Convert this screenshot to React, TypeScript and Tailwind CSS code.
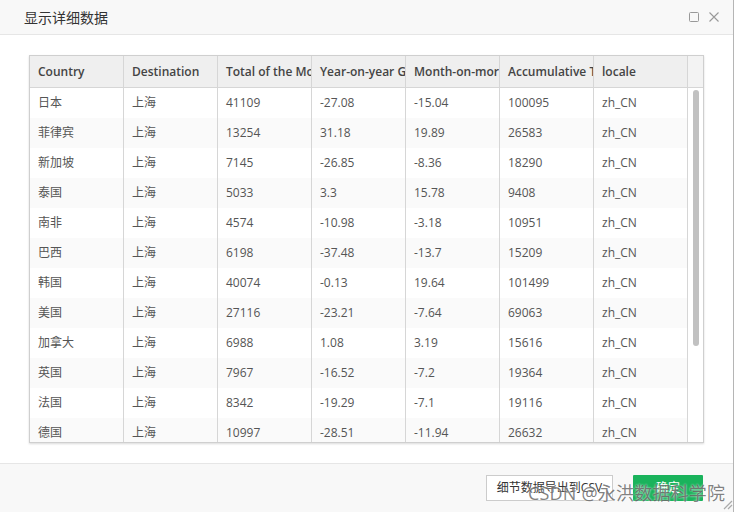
import React from 'react';

const COLS = ['Country', 'Destination', 'Total of the Mo', 'Year-on-year Gr', 'Month-on-mor', 'Accumulative T', 'locale'];

const ROWS: string[][] = [
  ['日本', '上海', '41109', '-27.08', '-15.04', '100095', 'zh_CN'],
  ['菲律宾', '上海', '13254', '31.18', '19.89', '26583', 'zh_CN'],
  ['新加坡', '上海', '7145', '-26.85', '-8.36', '18290', 'zh_CN'],
  ['泰国', '上海', '5033', '3.3', '15.78', '9408', 'zh_CN'],
  ['南非', '上海', '4574', '-10.98', '-3.18', '10951', 'zh_CN'],
  ['巴西', '上海', '6198', '-37.48', '-13.7', '15209', 'zh_CN'],
  ['韩国', '上海', '40074', '-0.13', '19.64', '101499', 'zh_CN'],
  ['美国', '上海', '27116', '-23.21', '-7.64', '69063', 'zh_CN'],
  ['加拿大', '上海', '6988', '1.08', '3.19', '15616', 'zh_CN'],
  ['英国', '上海', '7967', '-16.52', '-7.2', '19364', 'zh_CN'],
  ['法国', '上海', '8342', '-19.29', '-7.1', '19116', 'zh_CN'],
  ['德国', '上海', '10997', '-28.51', '-11.94', '26632', 'zh_CN'],
];

const font = { fontFamily: '"Open Sans", "Noto Sans CJK SC", sans-serif' };

export default function App() {
  return (
    <div className="relative w-[735px] h-[512px] overflow-hidden bg-white" style={font}>
      <div className="flex flex-col h-full w-[734px] border-r border-[#b5b5b5]">
        {/* Header */}
        <div className="h-[35px] shrink-0 flex items-center justify-between bg-[#f8f8f8] border-b border-[#e6e6e6] pl-[24px] pr-[14px]">
          <span className="text-[14px] text-[#333]">显示详细数据</span>
          <div className="flex items-center gap-[10px]">
            <svg width="10" height="10" viewBox="0 0 10 10">
              <rect x="0.5" y="0.5" width="9" height="9" rx="1" fill="none" stroke="#999" strokeWidth="1" />
            </svg>
            <svg width="10" height="10" viewBox="0 0 10 10">
              <path d="M0.5 0.5 L9.5 9.5 M9.5 0.5 L0.5 9.5" stroke="#999" strokeWidth="1.1" />
            </svg>
          </div>
        </div>

        {/* Body */}
        <div className="flex-1 pt-[20px] pl-[29px] pr-[30px]">
          <div className="relative w-[675px] h-[388px] border border-[#cfcfcf] overflow-hidden shadow-[0_1px_2px_rgba(0,0,0,0.15)]">
            <div className="flex h-[32px] bg-[#efefef] border-b border-[#d6d6d6]">
              {COLS.map((c) => (
                <div key={c} className="w-[94px] shrink-0 border-r border-[#d6d6d6] pl-[8px] pt-[1px] flex items-center text-[12px] font-semibold text-[#444] overflow-hidden whitespace-nowrap">
                  {c}
                </div>
              ))}
              <div className="flex-1 bg-[#f3f3f3]" />
            </div>
            <div className="flex">
              <div>
                {ROWS.map((r, i) => (
                  <div key={i} className={`flex h-[30px] ${i % 2 === 1 ? 'bg-[#fafafa]' : 'bg-white'}`}>
                    {r.map((v, j) => (
                      <div key={j} className="w-[94px] shrink-0 border-r border-[#d6d6d6] pl-[8px] flex items-center text-[12px] text-[#555] whitespace-nowrap">
                        {v}
                      </div>
                    ))}
                  </div>
                ))}
              </div>
              <div className="flex-1 pt-[2px] flex justify-center">
                <div className="w-[6px] h-[256px] rounded-[3px] bg-[#c1c1c1]" />
              </div>
            </div>
          </div>
        </div>

        {/* Footer */}
        <div className="h-[49px] shrink-0 bg-[#f8f8f8] border-t border-[#e6e6e6] flex items-start justify-end gap-[20px] pt-[11px] pr-[30px]">
          <button className="h-[26px] w-[127px] bg-white border border-[#cccccc] text-[12px] text-[#333]">
            细节数据导出到CSV
          </button>
          <button className="h-[26px] w-[70px] bg-[#1ab35c] text-[12px] text-white rounded-[1px]">确定</button>
        </div>
      </div>

      {/* watermark */}
      <div className="absolute left-[528px] top-[480px] text-[18px] tracking-[0.2px] text-[#4a4a4a]/70 whitespace-nowrap [text-shadow:0_0_2px_#fff]">
        CSDN @永洪数据科学院
      </div>
      {/* resize grip */}
      <svg className="absolute right-[2px] bottom-[2px]" width="12" height="12" viewBox="0 0 12 12">
        <path d="M3 11 L11 3 M7 11 L11 7" stroke="#aaa" strokeWidth="1.2" />
      </svg>
    </div>
  );
}
